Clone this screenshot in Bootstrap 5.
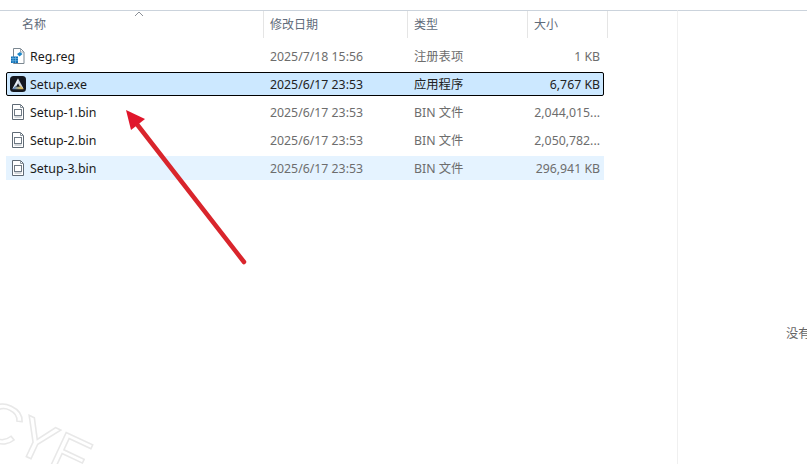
<!DOCTYPE html>
<html lang="zh-CN">
<head>
    <meta charset="UTF-8">
    <meta name="viewport" content="width=device-width, initial-scale=1.0">
    <title>Setup</title>
    <link href="https://cdn.jsdelivr.net/npm/bootstrap@5.3.0/dist/css/bootstrap.min.css" rel="stylesheet">
    <style>
        html, body {
            height: 100%;
        }
        body {
            background: #fff;
            font-family: "Noto Sans", "Noto Sans CJK SC", sans-serif;
            font-size: 12.3px;
            line-height: 16px;
            color: #6d6d6d;
            overflow: hidden;
        }
        .explorer {
            width: 807px;
            height: 464px;
            padding-top: 10px;
        }
        .list-pane {
            width: 677px;
            border-top: 1px solid #cbd3dc;
        }
        .preview-pane {
            width: 130px;
            border-top: 1px solid #cbd3dc;
            border-left: 1px solid #f0f0f0;
            padding: 315px 0 0 108px;
            white-space: nowrap;
            overflow: hidden;
            color: #666;
        }
        .head-row {
            height: 27px;
            margin-bottom: 6px;
            width: 608px;
        }
        .head-cell {
            height: 27px;
            padding-top: 6px;
            border-right: 1px solid #e5e5e5;
            color: #5f6b7a;
            position: relative;
            font-size: 12px;
        }
        .sort-mark {
            position: absolute;
            left: 134px;
            top: 0;
        }
        .c-name { width: 264px; padding-left: 22px; }
        .c-date { width: 144px; padding-left: 6px; }
        .c-type { width: 120px; padding-left: 6px; }
        .c-size { width: 80px; padding-left: 6px; }
        .file-row {
            width: 598px;
            height: 24px;
            margin: 0 0 4px 6px;
            border: 1px solid transparent;
            align-items: center;
        }
        .file-row.is-selected {
            background: #cce8ff;
            border-color: #000;
            border-radius: 2px;
            color: #222;
        }
        .file-row.is-hover {
            background: #e5f3ff;
        }
        .f-name {
            width: 257px;
            color: #1a1a1a;
            font-size: 12.4px;
            gap: 4px;
            padding-left: 3px;
        }
        .f-name span { padding-top: 2px; }
        .f-date { width: 144px; padding: 2px 0 0 6px; }
        .f-type { width: 120px; padding: 2px 0 0 6px; }
        .f-size { width: 75px; text-align: right; padding: 2px 3px 0 0; }
        .pointer-arrow {
            position: absolute;
            left: 110px;
            top: 100px;
        }
        .watermark-clip {
            position: absolute;
            left: 0;
            top: 400px;
            width: 120px;
            height: 64px;
            overflow: hidden;
        }
        .watermark {
            position: absolute;
            left: -5px;
            top: -10px;
            font-family: "Liberation Sans", sans-serif;
            font-size: 56px;
            line-height: 56px;
            color: #fff;
            -webkit-text-stroke: 1.5px #e8e8e8;
            transform: rotate(25deg);
            transform-origin: left top;
        }
    </style>
</head>
<body>
    <svg width="0" height="0" class="position-absolute">
        <symbol id="bin-doc" viewBox="0 0 16 16">
            <path d="M2.500 .5h8l3 3v12h-11z" fill="#fff" stroke="#5f6a75"/>
            <path d="M10.500 .5v3h3" fill="none" stroke="#8a949d"/>
            <rect x="4.500" y="5.500" width="7" height="6" fill="#fff" stroke="#6f7a85"/>
            <path d="M4.500 13h7" stroke="#a5adb5"/>
        </symbol>
    </svg>

    <div class="explorer d-flex">
        <div class="list-pane">
            <div class="head-row d-flex">
                <div class="head-cell c-name">名称
                    <svg class="sort-mark" width="10" height="6" viewBox="0 0 10 6"><path d="M1 5l4-4 4 4" fill="none" stroke="#8a8f96"/></svg>
                </div>
                <div class="head-cell c-date">修改日期</div>
                <div class="head-cell c-type">类型</div>
                <div class="head-cell c-size">大小</div>
            </div>

            <div class="file-row d-flex">
                <div class="f-name d-flex align-items-center">
                    <svg width="16" height="16" viewBox="0 0 16 16">
                        <path d="M3.500 .5h7l3.500 3.500v11.500h-10.500z" fill="#fff" stroke="#7b8791"/>
                        <path d="M10.500 .5v3.500h3.500" fill="none" stroke="#9aa3ac"/>
                        <path d="M1 8.500h7v6.500h-7z" fill="#0f6fb5"/>
                        <path d="M3 8.500v6.500M5.500 8.500v6.500M1 10.500h7M1 12.700h7" stroke="#7cc0ea" stroke-width=".6"/>
                        <path d="M7 6l3-2 2.500 2-3 2.500z" fill="#1a86c8"/>
                    </svg>
                    <span>Reg.reg</span>
                </div>
                <div class="f-date">2025/7/18 15:56</div>
                <div class="f-type">注册表项</div>
                <div class="f-size">1 KB</div>
            </div>

            <div class="file-row d-flex is-selected">
                <div class="f-name d-flex align-items-center">
                    <svg width="16" height="16" viewBox="0 0 16 16">
                        <defs>
                            <linearGradient id="logo-base" x1="0" y1="0" x2="1" y2="0">
                                <stop offset="0" stop-color="#3f78d8"/>
                                <stop offset=".55" stop-color="#b8b080"/>
                                <stop offset="1" stop-color="#f4c23c"/>
                            </linearGradient>
                        </defs>
                        <rect width="16" height="16" rx="3.500" fill="#14171f"/>
                        <path d="M8 2.200L2.400 12.800h4.200L8 9.800z" fill="#e8eef8"/>
                        <path d="M8 2.200l5.600 10.600H9.400L8 9.800z" fill="#cfd6e2"/>
                        <path d="M2.400 13.300l3-3.500h5.200l3 3.500z" fill="url(#logo-base)"/>
                        <path d="M8 7.300l1.900 3.400H6.100z" fill="#14171f"/>
                    </svg>
                    <span>Setup.exe</span>
                </div>
                <div class="f-date">2025/6/17 23:53</div>
                <div class="f-type">应用程序</div>
                <div class="f-size">6,767 KB</div>
            </div>

            <div class="file-row d-flex">
                <div class="f-name d-flex align-items-center">
                    <svg width="16" height="16"><use href="#bin-doc"/></svg>
                    <span>Setup-1.bin</span>
                </div>
                <div class="f-date">2025/6/17 23:53</div>
                <div class="f-type">BIN 文件</div>
                <div class="f-size">2,044,015...</div>
            </div>

            <div class="file-row d-flex">
                <div class="f-name d-flex align-items-center">
                    <svg width="16" height="16"><use href="#bin-doc"/></svg>
                    <span>Setup-2.bin</span>
                </div>
                <div class="f-date">2025/6/17 23:53</div>
                <div class="f-type">BIN 文件</div>
                <div class="f-size">2,050,782...</div>
            </div>

            <div class="file-row d-flex is-hover">
                <div class="f-name d-flex align-items-center">
                    <svg width="16" height="16"><use href="#bin-doc"/></svg>
                    <span>Setup-3.bin</span>
                </div>
                <div class="f-date">2025/6/17 23:53</div>
                <div class="f-type">BIN 文件</div>
                <div class="f-size">296,941 KB</div>
            </div>
        </div>
        <div class="preview-pane">没有预览</div>
    </div>

    <!-- annotation drawn on top of the screenshot -->
    <svg class="pointer-arrow" width="150" height="175" viewBox="0 0 150 175">
        <path d="M134 162L26 23" stroke="#d9252c" stroke-width="4.500" stroke-linecap="round" fill="none"/>
        <path d="M16 10L35 19 21 30z" fill="#e0162b"/>
    </svg>
    <div class="watermark-clip"><div class="watermark">CYE</div></div>

    <script src="https://cdn.jsdelivr.net/npm/bootstrap@5.3.0/dist/js/bootstrap.bundle.min.js"></script>
</body>
</html>
